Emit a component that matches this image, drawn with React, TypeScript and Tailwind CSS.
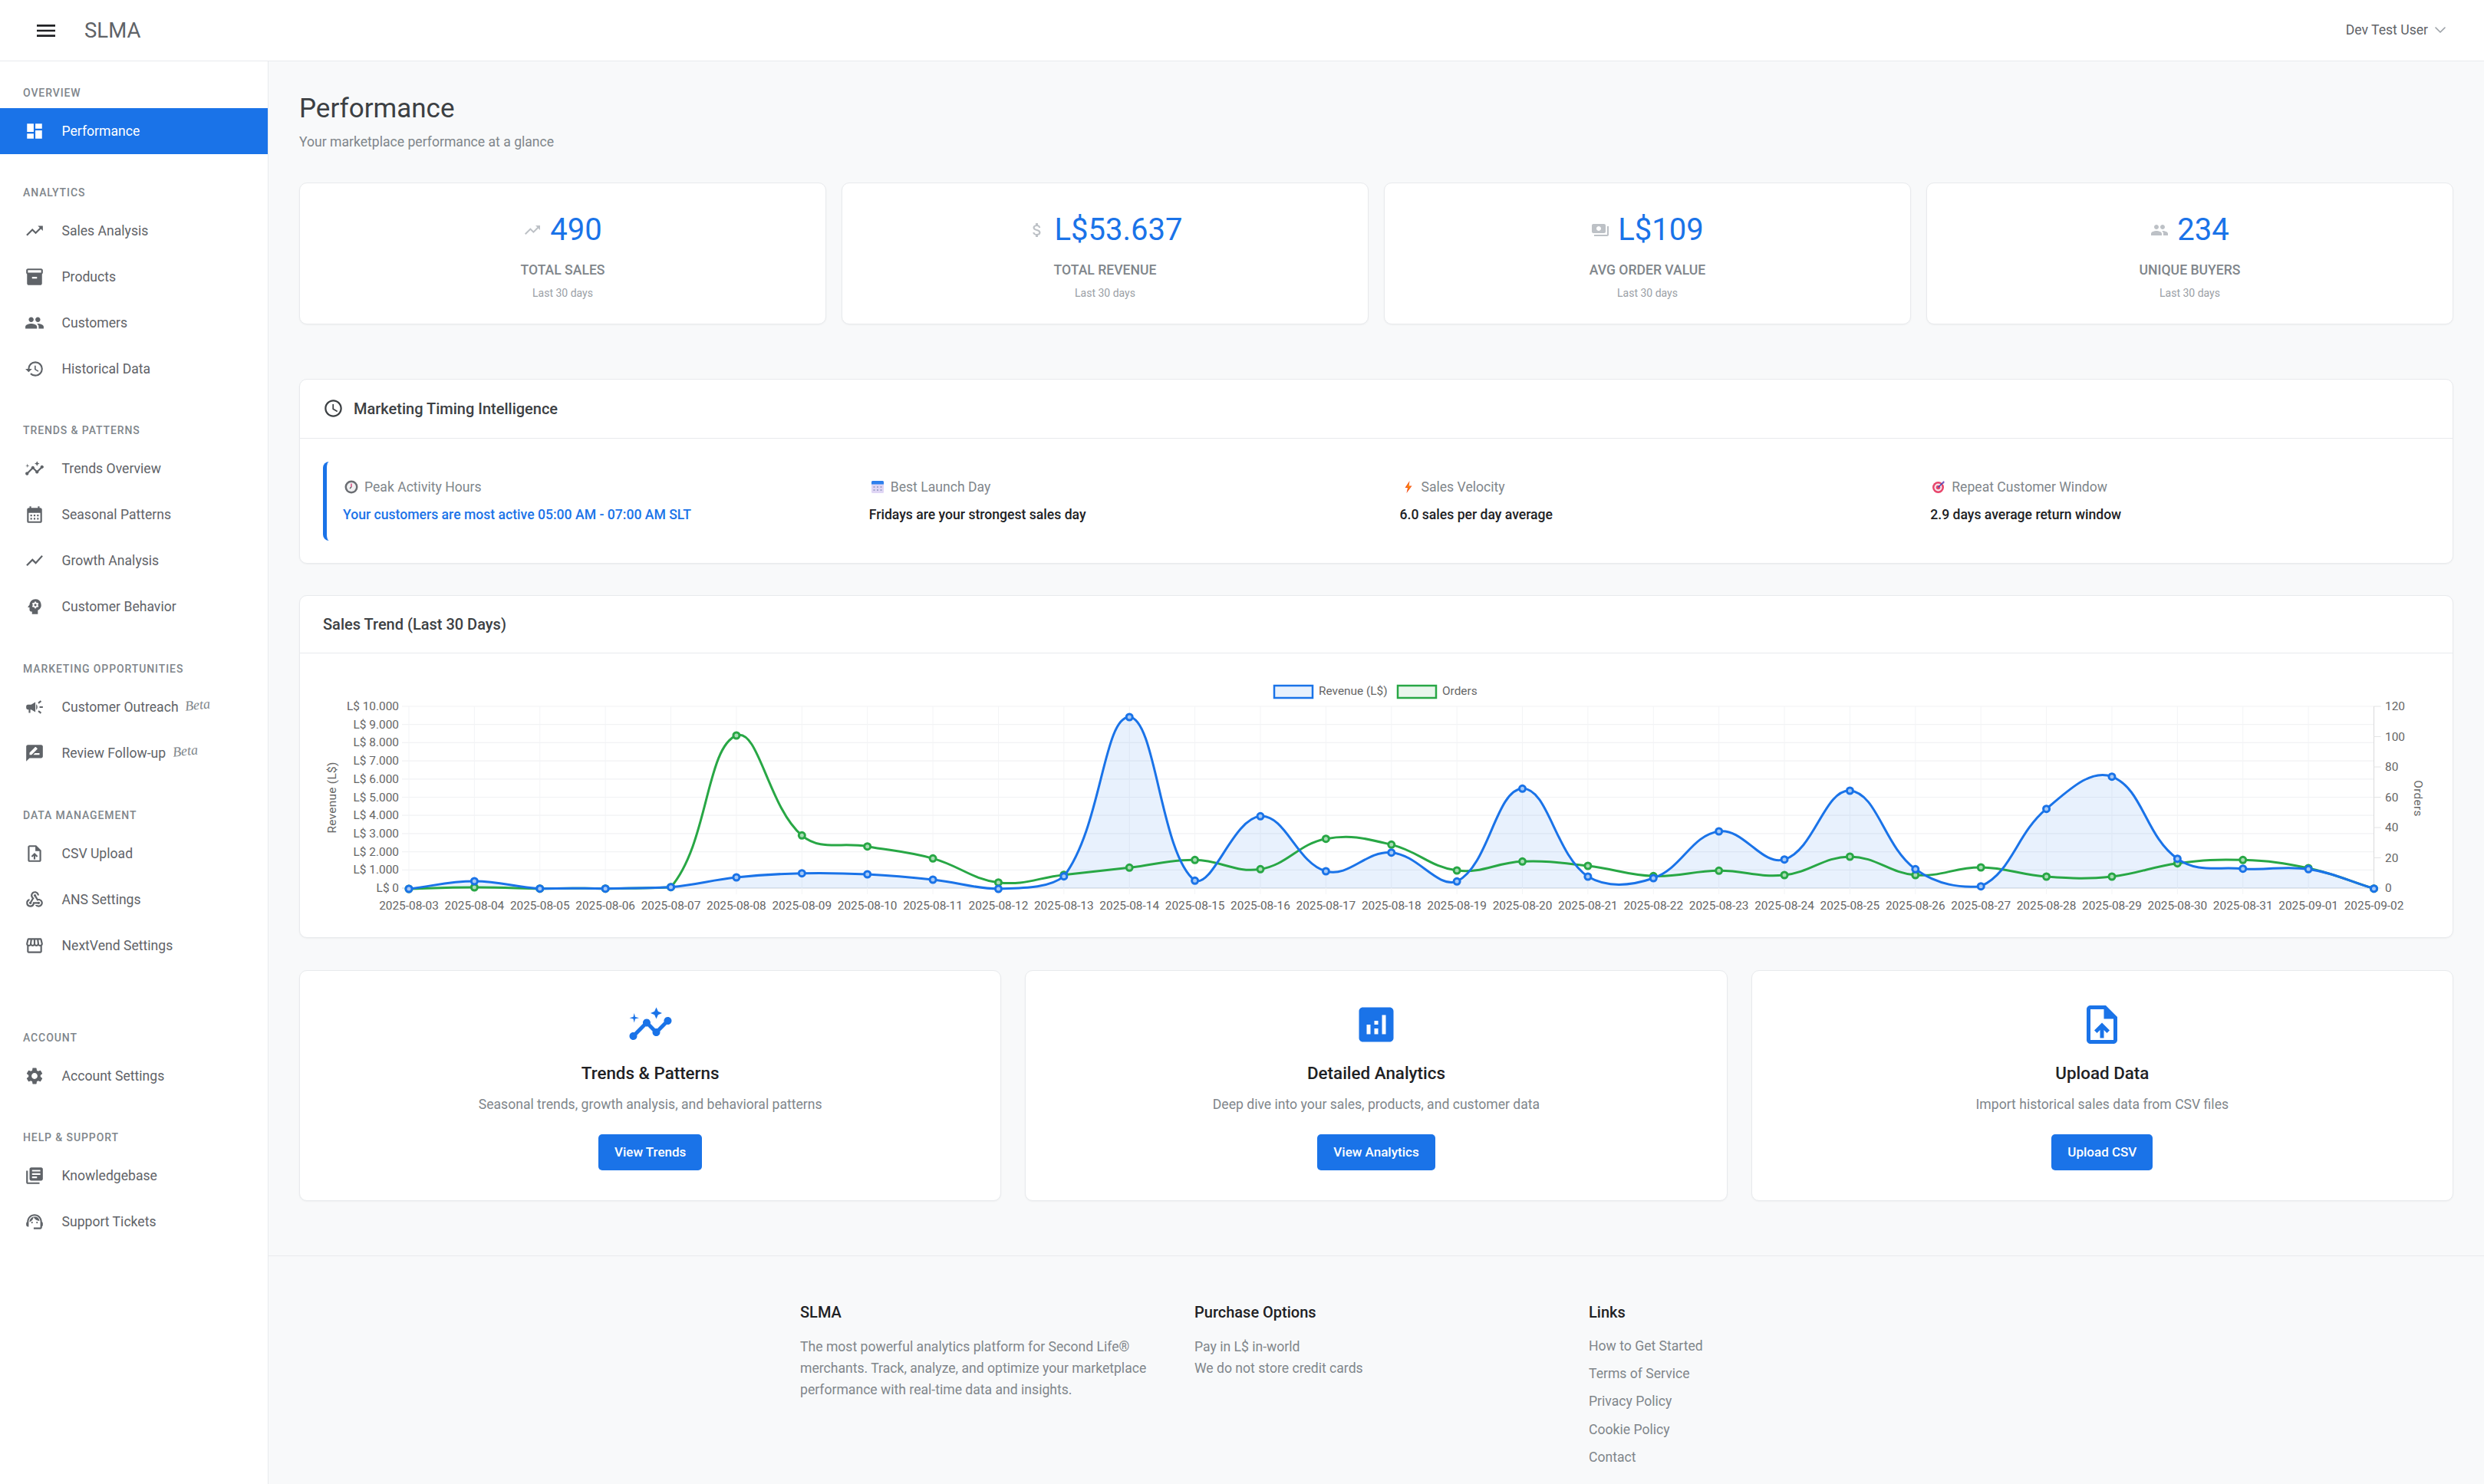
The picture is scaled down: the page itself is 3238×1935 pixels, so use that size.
import type { ComponentType, ReactNode } from "react";
import { ChevronDown } from "lucide-react";
import {
  MdMenu,
  MdDashboard,
  MdTrendingUp,
  MdInventory2,
  MdPeople,
  MdHistory,
  MdInsights,
  MdCalendarMonth,
  MdShowChart,
  MdPsychology,
  MdCampaign,
  MdRateReview,
  MdOutlineUploadFile,
  MdUploadFile,
  MdWebhook,
  MdOutlineStorefront,
  MdSettings,
  MdLibraryBooks,
  MdOutlineSupportAgent,
  MdAttachMoney,
  MdPayments,
  MdOutlineSchedule,
  MdAnalytics,
} from "react-icons/md";

type NavItem = { label: string; icon: ComponentType<{ size?: number; className?: string }>; active?: boolean; beta?: boolean };
type NavSection = { title: string; items: NavItem[]; spacing: string };

const sections: NavSection[] = [
  { title: "OVERVIEW", spacing: "", items: [{ label: "Performance", icon: MdDashboard, active: true }] },
  {
    title: "ANALYTICS",
    spacing: "mt-[42px]",
    items: [
      { label: "Sales Analysis", icon: MdTrendingUp },
      { label: "Products", icon: MdInventory2 },
      { label: "Customers", icon: MdPeople },
      { label: "Historical Data", icon: MdHistory },
    ],
  },
  {
    title: "TRENDS & PATTERNS",
    spacing: "mt-[42px]",
    items: [
      { label: "Trends Overview", icon: MdInsights },
      { label: "Seasonal Patterns", icon: MdCalendarMonth },
      { label: "Growth Analysis", icon: MdShowChart },
      { label: "Customer Behavior", icon: MdPsychology },
    ],
  },
  {
    title: "MARKETING OPPORTUNITIES",
    spacing: "mt-[43px]",
    items: [
      { label: "Customer Outreach", icon: MdCampaign, beta: true },
      { label: "Review Follow-up", icon: MdRateReview, beta: true },
    ],
  },
  {
    title: "DATA MANAGEMENT",
    spacing: "mt-[43px]",
    items: [
      { label: "CSV Upload", icon: MdOutlineUploadFile },
      { label: "ANS Settings", icon: MdWebhook },
      { label: "NextVend Settings", icon: MdOutlineStorefront },
    ],
  },
  { title: "ACCOUNT", spacing: "mt-[82px]", items: [{ label: "Account Settings", icon: MdSettings }] },
  {
    title: "HELP & SUPPORT",
    spacing: "mt-[42px]",
    items: [
      { label: "Knowledgebase", icon: MdLibraryBooks },
      { label: "Support Tickets", icon: MdOutlineSupportAgent },
    ],
  },
];

const stats = [
  { value: "490", label: "TOTAL SALES", icon: MdTrendingUp },
  { value: "L$53.637", label: "TOTAL REVENUE", icon: MdAttachMoney },
  { value: "L$109", label: "AVG ORDER VALUE", icon: MdPayments },
  { value: "234", label: "UNIQUE BUYERS", icon: MdPeople },
];

// chart data, as pixel rows read off the page (3x the offset from y=860)
const blueRows = [897, 867, 896, 896, 890, 852, 836, 840, 861, 897, 848, 225, 865, 613, 828, 755, 868, 505, 849, 855, 672, 782, 513, 820, 887, 584, 458, 779, 818, 820, 896];
const greenRows = [897, 891, 896, 896, 890, 297, 688, 731, 778, 872, 842, 814, 784, 820, 701, 724, 825, 790, 807, 847, 826, 843, 771, 843, 813, 849, 849, 797, 784, 816, 896];

const dates = [
  "2025-08-03", "2025-08-04", "2025-08-05", "2025-08-06", "2025-08-07", "2025-08-08", "2025-08-09", "2025-08-10",
  "2025-08-11", "2025-08-12", "2025-08-13", "2025-08-14", "2025-08-15", "2025-08-16", "2025-08-17", "2025-08-18",
  "2025-08-19", "2025-08-20", "2025-08-21", "2025-08-22", "2025-08-23", "2025-08-24", "2025-08-25", "2025-08-26",
  "2025-08-27", "2025-08-28", "2025-08-29", "2025-08-30", "2025-08-31", "2025-09-01", "2025-09-02",
];

const plotLeft = 533;
const plotRight = 3094.5;
const plotTop = 921;
const plotBottom = 1158;
const stepX = (plotRight - plotLeft) / 30;

const toPoints = (rows: number[]) => rows.map((v, i) => ({ x: plotLeft + i * stepX, y: 860 + v / 3 }));

// same spline as chart.js with tension 0.4
const splinePath = (pts: { x: number; y: number }[]) => {
  const clampY = (y: number) => Math.min(plotBottom, Math.max(plotTop, y));
  const ctrl = pts.map((cur, i) => {
    const prev = pts[i - 1] || cur;
    const next = pts[i + 1] || cur;
    const d01 = Math.hypot(cur.x - prev.x, cur.y - prev.y);
    const d12 = Math.hypot(next.x - cur.x, next.y - cur.y);
    const total = d01 + d12 || 1;
    const fa = (0.4 * d01) / total;
    const fb = (0.4 * d12) / total;
    return {
      inX: cur.x - fa * (next.x - prev.x),
      inY: clampY(cur.y - fa * (next.y - prev.y)),
      outX: cur.x + fb * (next.x - prev.x),
      outY: clampY(cur.y + fb * (next.y - prev.y)),
    };
  });
  let d = `M${pts[0].x} ${pts[0].y}`;
  for (let i = 1; i < pts.length; i++) {
    d += ` C${ctrl[i - 1].outX} ${ctrl[i - 1].outY} ${ctrl[i].inX} ${ctrl[i].inY} ${pts[i].x} ${pts[i].y}`;
  }
  return d;
};

const SalesChart = () => {
  const blue = toPoints(blueRows);
  const green = toPoints(greenRows);
  const bluePath = splinePath(blue);
  const greenPath = splinePath(green);
  const rowH = (plotBottom - plotTop) / 10;
  const leftTicks = ["L$ 10.000", "L$ 9.000", "L$ 8.000", "L$ 7.000", "L$ 6.000", "L$ 5.000", "L$ 4.000", "L$ 3.000", "L$ 2.000", "L$ 1.000", "L$ 0"];
  const rightTicks = ["120", "100", "80", "60", "40", "20", "0"];
  const textStyle = { fontFamily: "Roboto, sans-serif", fontSize: 15.4 };

  return (
    <svg width="2806" height="370" className="block">
      <g transform="translate(-391 -852)" style={textStyle}>
        {/* legend */}
        <rect x="1661" y="894" width="50" height="16" fill="#e8f1fd" stroke="#1a73e8" strokeWidth="2.5" />
        <text x="1719" y="906" fill="#666">Revenue (L$)</text>
        <rect x="1822" y="894" width="50" height="16" fill="#e9f6ec" stroke="#28a745" strokeWidth="2.5" />
        <text x="1880" y="906" fill="#666">Orders</text>

        {/* grid */}
        {leftTicks.map((t, i) => (
          <g key={t}>
            <line x1={plotLeft - 9} x2={plotRight} y1={plotTop + i * rowH} y2={plotTop + i * rowH} stroke={i === 10 ? "#d0d4da" : "#f1f2f4"} strokeWidth="1.2" />
            <text x="520" y={plotTop + i * rowH + 5} textAnchor="end" fill="#666">
              {t}
            </text>
          </g>
        ))}
        {dates.map((d, i) => (
          <g key={d}>
            <line x1={plotLeft + i * stepX} x2={plotLeft + i * stepX} y1={plotTop} y2={plotBottom + 8} stroke="#f3f4f6" strokeWidth="1" />
            <text x={plotLeft + i * stepX} y="1186" textAnchor="middle" fill="#666">
              {d}
            </text>
          </g>
        ))}
        <line x1={plotRight} x2={plotRight} y1={plotTop} y2={plotBottom} stroke="#d9dadb" strokeWidth="1" />
        {rightTicks.map((t, i) => (
          <g key={t}>
            <line x1={plotRight} x2={plotRight + 9} y1={plotTop + (i * (plotBottom - plotTop)) / 6} y2={plotTop + (i * (plotBottom - plotTop)) / 6} stroke="#e3e4e5" strokeWidth="1" />
            <text x="3109" y={plotTop + (i * (plotBottom - plotTop)) / 6 + 5} fill="#666">
              {t}
            </text>
          </g>
        ))}

        {/* axis titles */}
        <text transform="translate(438 1040) rotate(-90)" textAnchor="middle" fill="#666" letterSpacing="0.3">
          Revenue (L$)
        </text>
        <text transform="translate(3147 1041) rotate(90)" textAnchor="middle" fill="#666" letterSpacing="0.3">
          Orders
        </text>

        {/* series */}
        <path d={`${bluePath} L${plotRight} ${plotBottom} L${plotLeft} ${plotBottom} Z`} fill="rgba(26,115,232,0.1)" />
        <path d={greenPath} fill="none" stroke="#28a745" strokeWidth="3" />
        {green.map((p, i) => (
          <circle key={i} cx={p.x} cy={p.y} r="4" fill="#a9dcb5" stroke="#28a745" strokeWidth="3" />
        ))}
        <path d={bluePath} fill="none" stroke="#1a73e8" strokeWidth="3" />
        {blue.map((p, i) => (
          <circle key={i} cx={p.x} cy={p.y} r="4" fill="#a6c9f6" stroke="#1a73e8" strokeWidth="3" />
        ))}
      </g>
    </svg>
  );
};

const ClockEmoji = () => (
  <svg width="18" height="18" viewBox="0 0 18 18">
    <circle cx="9" cy="9" r="8.5" fill="#6b6e73" />
    <circle cx="9" cy="9" r="6" fill="#f1f1f3" />
    <path d="M9 9V4.5" stroke="#d6336c" strokeWidth="1.3" />
    <path d="M9 9l-2 2" stroke="#55585c" strokeWidth="1.2" />
  </svg>
);

const CalendarEmoji = () => (
  <svg width="18" height="18" viewBox="0 0 18 18">
    <rect x="1" y="1" width="16" height="16" rx="1.5" fill="#e0d6f5" />
    <path d="M1 2.5A1.5 1.5 0 0 1 2.5 1h13A1.5 1.5 0 0 1 17 2.5V5.5H1z" fill="#2f80ed" />
    <g fill="#a3a5cc">
      <rect x="3.5" y="8" width="2" height="2" />
      <rect x="8" y="8" width="2" height="2" />
      <rect x="12.5" y="8" width="2" height="2" />
      <rect x="3.5" y="12" width="2" height="2" />
      <rect x="8" y="12" width="2" height="2" />
      <rect x="12.5" y="12" width="2" height="2" />
    </g>
  </svg>
);

const BoltEmoji = () => (
  <svg width="18" height="18" viewBox="0 0 18 18">
    <path d="M10.5 1 4.5 10h3.5l-1.5 7 7-9.5H9.5z" fill="#f4511e" />
    <path d="M10 3 6.5 9h2.5l-.8 4.5L12 8H9z" fill="#fb8c00" />
  </svg>
);

const TargetEmoji = () => (
  <svg width="18" height="18" viewBox="0 0 18 18">
    <circle cx="8.5" cy="9.5" r="7.5" fill="#e8456b" />
    <circle cx="8.5" cy="9.5" r="5" fill="#f6e6ee" />
    <circle cx="8.5" cy="9.5" r="2.8" fill="#e8456b" />
    <path d="M8.5 9.5 15 3" stroke="#3f51b5" strokeWidth="1.6" />
    <path d="M14 2l1 .2.2-1.2 2 2-1.2.2.2 1-2 .6z" fill="#7e57c2" />
  </svg>
);

const timing: { label: string; value: string; emoji: ReactNode; highlight?: boolean }[] = [
  { label: "Peak Activity Hours", value: "Your customers are most active 05:00 AM - 07:00 AM SLT", emoji: <ClockEmoji />, highlight: true },
  { label: "Best Launch Day", value: "Fridays are your strongest sales day", emoji: <CalendarEmoji /> },
  { label: "Sales Velocity", value: "6.0 sales per day average", emoji: <BoltEmoji /> },
  { label: "Repeat Customer Window", value: "2.9 days average return window", emoji: <TargetEmoji /> },
];

const actions = [
  { title: "Trends & Patterns", text: "Seasonal trends, growth analysis, and behavioral patterns", button: "View Trends", icon: MdInsights },
  { title: "Detailed Analytics", text: "Deep dive into your sales, products, and customer data", button: "View Analytics", icon: MdAnalytics },
  { title: "Upload Data", text: "Import historical sales data from CSV files", button: "Upload CSV", icon: MdUploadFile },
];

const cardClass = "bg-white border border-[#e8eaed] rounded-[10px] shadow-[0_1px_2px_rgba(60,64,67,0.05)]";

const Sidebar = () => (
  <aside className="w-[350px] shrink-0 bg-white border-r border-[#e8eaed] pt-[33px]">
    {sections.map((section) => (
      <div key={section.title} className={section.spacing}>
        <div className="h-[16px] mb-[12px] pl-[30px] text-[14px] leading-[16px] font-medium tracking-[0.9px] text-[#80868b]">{section.title}</div>
        {section.items.map((item) => {
          const Icon = item.icon;
          return (
            <div
              key={item.label}
              className={`h-[60px] flex items-center pl-[32px] gap-[22.5px] text-[17.6px] ${item.active ? "bg-[#1a73e8] text-white" : "text-[#5f6368]"}`}
            >
              <Icon size={26} className="shrink-0" />
              <span>{item.label}</span>
              {item.beta && (
                <span className="-ml-[14px] -mt-[6px] -rotate-6 italic text-[18px] text-[#80868b] font-[family-name:cursive]">Beta</span>
              )}
            </div>
          );
        })}
      </div>
    ))}
  </aside>
);

const Footer = () => (
  <footer className="mt-[71px] border-t border-[#e8eaed] pt-[59px] h-[298px]">
    <div className="flex justify-center gap-[40px]">
      <div className="w-[474px]">
        <h4 className="text-[20px] leading-[28px] font-medium text-[#202124]">SLMA</h4>
        <p className="mt-[17px] text-[17.6px] leading-[28px] text-[#80868b]">
          The most powerful analytics platform for Second Life® merchants. Track, analyze, and optimize your marketplace performance with real-time data and insights.
        </p>
      </div>
      <div className="w-[474px]">
        <h4 className="text-[20px] leading-[28px] font-medium text-[#202124]">Purchase Options</h4>
        <p className="mt-[17px] text-[17.6px] leading-[28px] text-[#80868b]">
          Pay in L$ in-world
          <br />
          We do not store credit cards
        </p>
      </div>
      <div className="w-[474px]">
        <h4 className="text-[20px] leading-[28px] font-medium text-[#202124]">Links</h4>
        <ul className="mt-[16px] flex flex-col gap-[8.2px] text-[17.6px] leading-[28px] text-[#80868b]">
          <li>How to Get Started</li>
          <li>Terms of Service</li>
          <li>Privacy Policy</li>
          <li>Cookie Policy</li>
          <li>Contact</li>
        </ul>
      </div>
    </div>
  </footer>
);

export default function App() {
  return (
    <div className="h-[1935px] overflow-hidden flex flex-col bg-[#f8f9fa] font-[family-name:Roboto,sans-serif]">
      <header className="h-[80px] shrink-0 bg-white border-b border-[#e8eaed] flex items-center pl-[44px] pr-[45px]">
        <MdMenu size={32} className="text-[#202124]" />
        <span className="ml-[34px] text-[27.5px] text-[#5f6368]">SLMA</span>
        <div className="ml-auto flex items-center gap-[4px] text-[17.6px] text-[#5f6368]">
          <span>Dev Test User</span>
          <ChevronDown size={24} strokeWidth={1.6} className="text-[#9aa0a6]" />
        </div>
      </header>

      <div className="flex-1 flex min-h-0">
        <Sidebar />

        <main className="flex-1 min-w-0 flex flex-col">
          <div className="px-[40px] pt-[42px]">
            <h1 className="text-[35px] leading-[40px] text-[#3c4043]">Performance</h1>
            <p className="mt-[10px] text-[17.6px] leading-[26px] text-[#80868b]">Your marketplace performance at a glance</p>

            <div className="mt-[40px] grid grid-cols-4 gap-[20px]">
              {stats.map((stat) => {
                const Icon = stat.icon;
                return (
                  <div key={stat.label} className={`${cardClass} h-[185px] pt-[37px] flex flex-col items-center`}>
                    <div className="h-[48px] flex items-center gap-[11px]">
                      <Icon size={24} className="text-[#bdc1c6]" />
                      <span className="text-[40px] leading-[48px] text-[#1a73e8]">{stat.value}</span>
                    </div>
                    <div className="mt-[16px] text-[17.6px] leading-[24px] font-medium text-[#80868b]">{stat.label}</div>
                    <div className="mt-[8px] text-[14px] leading-[20px] text-[#9aa0a6]">Last 30 days</div>
                  </div>
                );
              })}
            </div>

            <section className={`${cardClass} mt-[71px] h-[241px]`}>
              <div className="h-[77px] pb-[1px] border-b border-[#e8eaed] flex items-center pl-[30px] gap-[13px]">
                <MdOutlineSchedule size={27} className="text-[#3c4043]" />
                <h3 className="text-[20px] font-medium text-[#3c4043]">Marketing Timing Intelligence</h3>
              </div>
              <div className="p-[30px] grid grid-cols-4 gap-[21px]">
                {timing.map((t) => (
                  <div key={t.label} className={`h-[103px] pt-[21px] ${t.highlight ? "pl-[21px] border-l-[5px] border-[#1a73e8] rounded-l-[8px]" : "pl-[20px]"}`}>
                    <div className="h-[24px] flex items-center gap-[8px] text-[17.6px] text-[#80868b]">
                      <span className="ml-[2px]">{t.emoji}</span>
                      <span>{t.label}</span>
                    </div>
                    <div className={`mt-[12px] text-[17.6px] leading-[24px] font-medium ${t.highlight ? "text-[#1a73e8]" : "text-[#202124]"}`}>{t.value}</div>
                  </div>
                ))}
              </div>
            </section>

            <section className={`${cardClass} mt-[41px] h-[447px]`}>
              <div className="h-[75px] border-b border-[#e8eaed] flex items-center pl-[30px]">
                <h3 className="text-[20px] font-medium text-[#3c4043]">Sales Trend (Last 30 Days)</h3>
              </div>
              <SalesChart />
            </section>

            <div className="mt-[42px] grid grid-cols-3 gap-[31px]">
              {actions.map((action) => {
                const Icon = action.icon;
                return (
                  <div key={action.title} className={`${cardClass} h-[301px] pt-[40px] flex flex-col items-center`}>
                    <Icon size={60} className="text-[#1a73e8]" />
                    <h3 className="mt-[17px] text-[22.4px] leading-[32px] font-medium text-[#202124]">{action.title}</h3>
                    <p className="mt-[12px] text-[17.6px] leading-[26px] text-[#80868b]">{action.text}</p>
                    <button className="mt-[26px] h-[47px] px-[21px] rounded-[5px] bg-[#1a73e8] text-white text-[17px] font-medium">{action.button}</button>
                  </div>
                );
              })}
            </div>
          </div>

          <Footer />
        </main>
      </div>
    </div>
  );
}
